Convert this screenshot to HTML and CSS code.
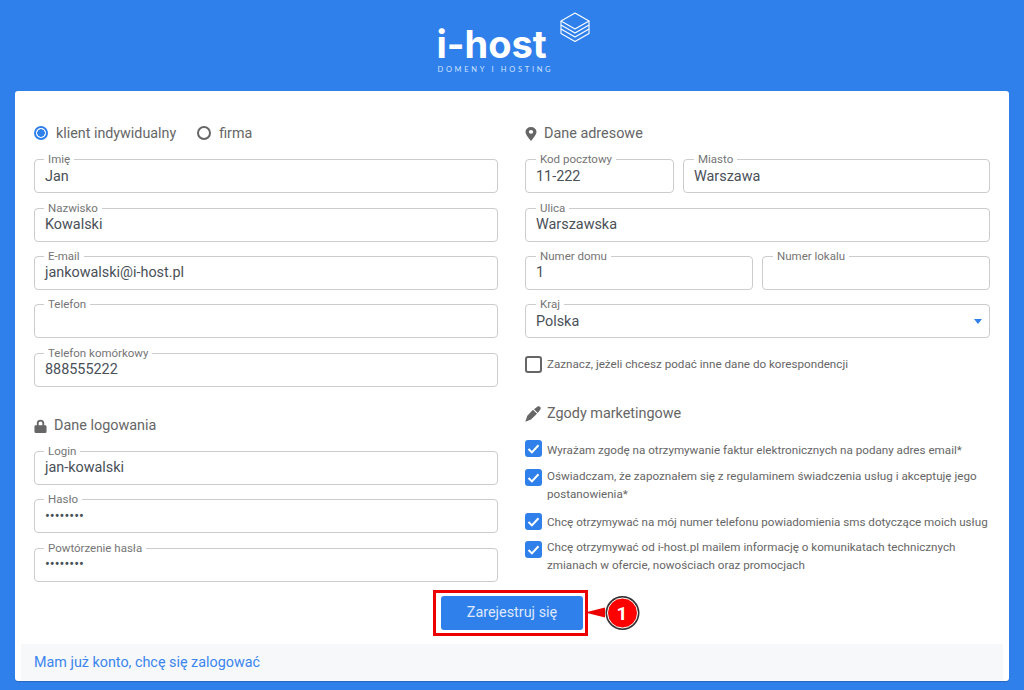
FILE: index.html
```html
<!DOCTYPE html>
<html lang="pl">
<head>
<meta charset="utf-8">
<title>i-host rejestracja</title>
<link rel="stylesheet" href="styles.css">
</head>
<body>
<header class="brand">
  <div class="logo">
    <div class="logo-name">i-host</div>
    <div class="logo-tag">DOMENY I HOSTING</div>
    <svg class="logo-icon" viewBox="0 0 30 32" width="30" height="32" fill="none" stroke="#fff" stroke-width="1.1" stroke-linejoin="round">
      <path d="M15 1 L29 9 L15 17 L1 9 Z"/>
      <path d="M1 9 V13 L15 21 L29 13 V9"/>
      <path d="M1 13 V17 L15 25 L29 17 V13"/>
      <path d="M1 17 V21.500 L15 29.500 L29 21.500 V17"/>
    </svg>
  </div>
</header>
<main class="card">
  <div class="columns">
    <section class="col">
      <div class="radios">
        <span class="radio-item"><span class="radio on"></span>klient indywidualny</span>
        <span class="radio-item"><span class="radio"></span>firma</span>
      </div>
      <div class="stack">
        <div class="field"><label>Imię</label><span class="value">Jan</span></div>
        <div class="field"><label>Nazwisko</label><span class="value">Kowalski</span></div>
        <div class="field"><label>E-mail</label><span class="value">jankowalski@i-host.pl</span></div>
        <div class="field"><label>Telefon</label><span class="value"></span></div>
        <div class="field"><label>Telefon komórkowy</label><span class="value">888555222</span></div>
      </div>
      <h2 class="heading login-heading">
        <svg class="ico" viewBox="0 0 14 16" width="13" height="14" preserveAspectRatio="none" fill="#666"><path fill-rule="evenodd" d="M3 7V4.800a4 4 0 0 1 8 0V7h1a1.500 1.500 0 0 1 1.500 1.500v6A1.500 1.500 0 0 1 12 16H2A1.500 1.500 0 0 1 .5 14.500v-6A1.500 1.500 0 0 1 2 7zm2 0h4V4.800a2 2 0 0 0-4 0z"/></svg>
        Dane logowania
      </h2>
      <div class="stack">
        <div class="field"><label>Login</label><span class="value">jan-kowalski</span></div>
        <div class="field"><label>Hasło</label><span class="value">••••••••</span></div>
        <div class="field"><label>Powtórzenie hasła</label><span class="value">••••••••</span></div>
      </div>
    </section>
    <section class="col col-right">
      <h2 class="heading addr-heading">
        <svg class="ico" viewBox="0 0 12 16" width="12" height="14" preserveAspectRatio="none" fill="#666"><path fill-rule="evenodd" d="M6 0a5.500 5.500 0 0 1 5.500 5.500C11.500 9 7.500 14 6 16 4.500 14 .5 9 .5 5.500A5.500 5.500 0 0 1 6 0zm0 3.300a2.200 2.200 0 1 0 0 4.400 2.200 2.200 0 0 0 0-4.400z"/></svg>
        Dane adresowe
      </h2>
      <div class="stack">
        <div class="row">
          <div class="field w-kod"><label>Kod pocztowy</label><span class="value">11-222</span></div>
          <div class="field grow"><label>Miasto</label><span class="value">Warszawa</span></div>
        </div>
        <div class="field"><label>Ulica</label><span class="value">Warszawska</span></div>
        <div class="row">
          <div class="field grow"><label>Numer domu</label><span class="value">1</span></div>
          <div class="field grow"><label>Numer lokalu</label><span class="value"></span></div>
        </div>
        <div class="field"><label>Kraj</label><span class="value">Polska</span><span class="caret"></span></div>
      </div>
      <div class="check corr"><span class="box"></span><span class="check-text">Zaznacz, jeżeli chcesz podać inne dane do korespondencji</span></div>
      <h2 class="heading consent-heading">
        <svg class="ico" viewBox="0 0 16 16" width="16" height="16" fill="#666"><path d="M.3 15.700 2.300 9.800l5.700-6 4 4-6 5.700zM9 3.200 12.600.5c.9-.5 2-.3 2.500.3s.8 1.600.4 2.500l-2.700 3.700z"/></svg>
        Zgody marketingowe
      </h2>
      <div class="checks">
        <div class="check single"><span class="box on"><svg viewBox="0 0 17 17" width="17" height="17"><path d="M3.500 9l3.400 3.400 6.600-7.100" fill="none" stroke="#fff" stroke-width="2"/></svg></span><span class="check-text">Wyrażam zgodę na otrzymywanie faktur elektronicznych na podany adres email*</span></div>
        <div class="check multi"><span class="box on"><svg viewBox="0 0 17 17" width="17" height="17"><path d="M3.500 9l3.400 3.400 6.600-7.100" fill="none" stroke="#fff" stroke-width="2"/></svg></span><span class="check-text">Oświadczam, że zapoznałem się z regulaminem świadczenia usług i akceptuję jego postanowienia*</span></div>
        <div class="check single sms"><span class="box on"><svg viewBox="0 0 17 17" width="17" height="17"><path d="M3.500 9l3.400 3.400 6.600-7.100" fill="none" stroke="#fff" stroke-width="2"/></svg></span><span class="check-text">Chcę otrzymywać na mój numer telefonu powiadomienia sms dotyczące moich usług</span></div>
        <div class="check multi last"><span class="box on"><svg viewBox="0 0 17 17" width="17" height="17"><path d="M3.500 9l3.400 3.400 6.600-7.100" fill="none" stroke="#fff" stroke-width="2"/></svg></span><span class="check-text">Chcę otrzymywać od i-host.pl mailem informację o komunikatach technicznych zmianach w ofercie, nowościach oraz promocjach</span></div>
      </div>
    </section>
  </div>
  <div class="actions">
    <div class="btn-wrap">
      <button class="btn" type="button">Zarejestruj się</button>
      <div class="callout">
        <span class="arrow"></span>
        <span class="badge">1</span>
      </div>
    </div>
  </div>
  <div class="card-foot"><a href="#">Mam już konto, chcę się zalogować</a></div>
</main>
</body>
</html>
```
FILE: styles.css
```css
* { box-sizing: border-box; }
html, body { height: 100%; }
body {
  margin: 0;
  background: #3080ec;
  font-family: Roboto, "Liberation Sans", sans-serif;
  overflow: hidden;
}
.brand { height: 91px; display: flex; justify-content: center; }
.logo { position: relative; width: 154px; height: 91px; margin-left: 3px; }
.logo-name {
  position: absolute; left: 0; top: 21px;
  font-family: Inter, "Open Sans", sans-serif;
  font-weight: 700; font-size: 38px; line-height: 46px; color: #fff;
}
.logo-tag {
  position: absolute; left: 1px; top: 65px;
  font-family: Lato, sans-serif;
  font-size: 7.500px; line-height: 9px; letter-spacing: 2.700px; color: #cfe2fb; white-space: nowrap;
}
.logo-icon { position: absolute; left: 123px; top: 12px; }

.card {
  margin: 0 15px;
  height: 590px;
  background: #fff;
  border-radius: 3px;
  padding: 0 6px;
  display: flex;
  flex-direction: column;
  box-shadow: 0 1px 1px rgba(0,0,0,.2);
}
.columns {
  display: grid;
  grid-template-columns: 464px 465px;
  column-gap: 27px;
  padding: 0 13px;
}
.col { display: flex; flex-direction: column; min-width: 0; }
.radios {
  display: flex; gap: 21px; align-items: center;
  height: 20px; margin-top: 32px; margin-bottom: 16.200px;
  font-size: 14.300px; color: #666;
}
.radio-item { display: flex; align-items: center; gap: 8px; }
.radio {
  width: 14px; height: 14px; border-radius: 50%; border: 2px solid #666; background: #fff; display: block;
}
.radio.on { border-color: #3080ec; background: radial-gradient(circle, #3080ec 0 3.500px, #fff 4px); }
.stack { display: flex; flex-direction: column; gap: 14.400px; }
.row { display: flex; gap: 9px; }
.grow { flex: 1 1 0; min-width: 0; }
.w-kod { flex: 0 0 149px; }
.field {
  position: relative;
  height: 34px;
  border: 1px solid #ccc;
  border-radius: 4px;
  padding: 1px 10px 0;
  display: flex; align-items: center;
}
.field label {
  position: absolute; left: 9px; top: -7px;
  background: #fff; padding: 0 4px;
  font-size: 11.500px; line-height: 12px; color: #757575; white-space: nowrap;
}
.col-right .field label { left: 10px; }
.value { font-size: 14.400px; line-height: 20px; color: #495057; }
.caret {
  position: absolute; right: 7px; top: 14px;
  width: 0; height: 0;
  border-left: 4.500px solid transparent; border-right: 4.500px solid transparent; border-top: 5px solid #3080ec;
}
.heading {
  margin: 0; font-weight: 400; font-size: 14.400px; line-height: 20px; color: #666;
  display: flex; align-items: center;
}
.login-heading { margin-top: 29.200px; margin-bottom: 15px; gap: 7px; }
.addr-heading { margin-top: 33px; margin-bottom: 15.200px; gap: 7px; }
.consent-heading { margin-top: 31px; margin-bottom: 17px; gap: 6px; }
.check { display: flex; gap: 5px; align-items: flex-start; }
.box {
  flex: none; width: 17px; height: 17px; border: 2px solid #666; border-radius: 3px; display: block; background: #fff;
}
.box.on { border: 0; background: #3080ec; }
.box svg { display: block; }
.check-text { font-size: 11.650px; line-height: 18px; color: #666; }
.corr { margin-top: 18px; }
.corr .check-text { margin-top: -1px; }
.checks { display: flex; flex-direction: column; gap: 8px; }
.single .box { margin-top: -1px; }
.multi .box { margin-top: 2px; }
.sms { margin-top: 2px; }
.sms .box { margin-top: 0; }
.last { margin-top: -1px; }
.last .box { margin-top: 3px; }
.actions { display: flex; justify-content: center; margin-top: 8.200px; margin-left: -3px; }
.btn-wrap { position: relative; border: 3px solid #ed0000; padding: 3px 2px 3px 5px; }
.btn {
  display: block; width: 142px; height: 34px; border: 0; border-radius: 3px;
  background: #3080ec; color: #dfe9fb; font: 400 14.400px Roboto, sans-serif;
}
.callout { position: absolute; left: 100%; top: 50%; transform: translateY(-50%); display: flex; align-items: center; }
.arrow { width: 0; height: 0; border-top: 5.500px solid transparent; border-bottom: 5.500px solid transparent; border-right: 20px solid #ed0000; }
.badge {
  width: 31px; height: 31px; margin-left: 1.500px; border-radius: 50%; background: #f00; color: #fff;
  border: 1px solid #fff; box-shadow: 0 0 0 1.500px #333;
  font: 700 19px/29px Roboto, sans-serif; text-align: center;
}
.card-foot {
  margin-top: auto; height: 37px; background: #f7f8fa;
  padding: 0 13px; display: flex; align-items: center;
}
.card-foot a { color: #3a86ee; font-size: 14.350px; text-decoration: none; }
```
